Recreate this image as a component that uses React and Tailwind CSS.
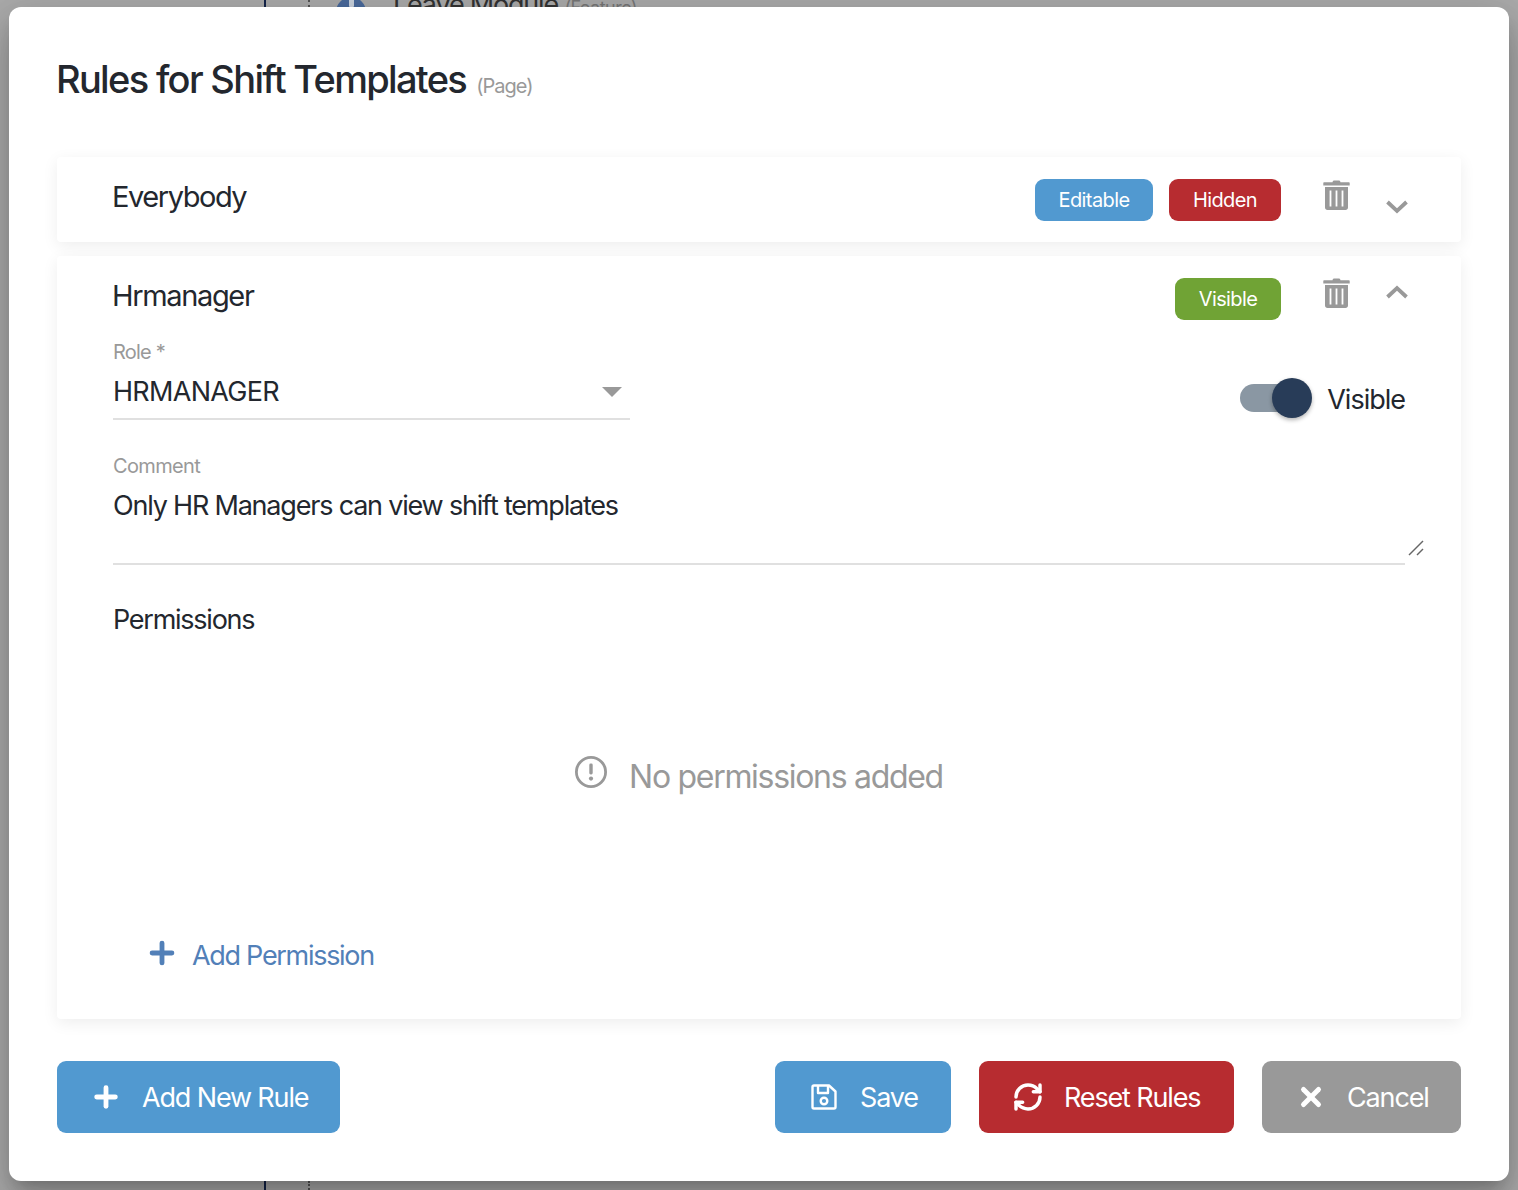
import React from "react";
import { Plus, X, RefreshCw } from "lucide-react";

const FONT = "font-['Inter','Liberation_Sans',sans-serif]";

function Trash() {
  return (
    <svg width="27" height="30" viewBox="0 0 27 30" className="block" fill="#999999">
      <path d="M9.5 2.2 C9.8 1 10.6 0.6 11.5 0.6 H15.5 C16.4 0.6 17.2 1 17.5 2.2 H26 C26.4 2.2 26.7 2.5 26.7 2.9 V5.4 H0.3 V2.9 C0.3 2.5 0.6 2.2 1 2.2 Z" />
      <path fillRule="evenodd" d="M2 7 H25 V27.5 C25 29 24 30 22.5 30 H4.5 C3 30 2 29 2 27.5 Z M6.6 10.4 V26.4 H8.4 V10.4 Z M12.6 10.4 V26.4 H14.4 V10.4 Z M18.6 10.4 V26.4 H20.4 V10.4 Z" />
    </svg>
  );
}

function Chevron({ up }) {
  return (
    <svg width="22" height="14" viewBox="0 0 22 14" fill="none" stroke="#999999" strokeWidth="3.8" className="block">
      {up ? <path d="M1.5 12 L11 3 L20.5 12" /> : <path d="M1.5 2 L11 11 L20.5 2" />}
    </svg>
  );
}

function Badge({ className, children }) {
  return (
    <span className={`flex h-[42px] items-center justify-center rounded-[9px] text-[20px] tracking-[-0.6px] text-white ${className}`}>
      {children}
    </span>
  );
}

function Btn({ className, icon, gap, children }) {
  return (
    <button className={`flex h-[72px] items-center rounded-[9px] pt-[2px] text-[27px] tracking-[-1.15px] text-white ${className}`}>
      <span className="mt-[-2px]">{icon}</span>
      <span className={gap}>{children}</span>
    </button>
  );
}

export default function App() {
  return (
    <div className={`relative h-[1190px] w-[1518px] overflow-hidden bg-[#ababab] pb-[9px] pl-[9px] pr-[9px] pt-[7px] ${FONT}`}>
      {/* page behind the overlay */}
      <div className="absolute left-[264px] top-0 h-[7px] w-[2px] bg-[#14244a]" />
      <div className="absolute bottom-0 left-[264px] h-[9px] w-[2px] bg-[#14244a]" />
      <div className="absolute left-[308px] top-0 h-[7px] border-l-2 border-dotted border-[#555]" />
      <div className="absolute bottom-0 left-[308px] h-[9px] border-l-2 border-dotted border-[#555]" />
      <div className="absolute left-[336px] top-[-3px] flex h-[30px] w-[30px] items-start justify-center rounded-full bg-[#4a6a9c] pt-[1px]">
        <span className="h-[9px] w-[5px] rounded-[1px] bg-[#c9d2de]" />
      </div>
      <div className="absolute left-[393px] top-[-12px] whitespace-nowrap text-[27px] leading-[34px] tracking-[-1.2px] text-[#333]">
        Leave Module <span className="text-[18px] tracking-[-0.5px] text-[#777]">(Feature)</span>
      </div>

      <div className="relative flex h-[1174px] w-[1500px] flex-col rounded-[12px] bg-white px-[48px] shadow-[0_11px_15px_-7px_rgba(0,0,0,0.2),0_24px_38px_3px_rgba(0,0,0,0.14),0_9px_46px_8px_rgba(0,0,0,0.12)]">
        <div className="flex h-[150px] shrink-0 items-start pt-[49px]">
          <h1 className="ml-[-1px] text-[38px] font-medium leading-[46px] tracking-[-1.68px] text-[#23272e]">Rules for Shift Templates</h1>
          <span className="ml-[10px] mt-[18px] text-[20px] leading-[24px] tracking-[-1px] text-[#999999]">(Page)</span>
        </div>

        {/* Everybody */}
        <div className="flex h-[85px] shrink-0 items-start rounded-[4px] bg-white pl-[56px] shadow-[0_4px_16px_rgba(0,0,0,0.07)]">
          <div className="ml-[-1px] mt-[22px] text-[29px] leading-[36px] tracking-[-1.45px] text-[#23272e]">Everybody</div>
          <div className="ml-auto mt-[22px] flex gap-[16px]">
            <Badge className="w-[118px] bg-[#5199d0]">Editable</Badge>
            <Badge className="w-[112px] bg-[#b72c30]">Hidden</Badge>
          </div>
          <div className="ml-[42px] mt-[23px]"><Trash /></div>
          <div className="ml-[36px] mr-[53px] mt-[43px]"><Chevron /></div>
        </div>

        {/* Hrmanager */}
        <div className="mt-[14px] flex h-[763px] shrink-0 flex-col rounded-[4px] bg-white pl-[56px] pr-[56px] shadow-[0_4px_16px_rgba(0,0,0,0.07)]">
          <div className="flex items-start">
            <div className="ml-[-1px] mt-[22px] text-[29px] leading-[36px] tracking-[-1.35px] text-[#23272e]">Hrmanager</div>
            <div className="ml-auto mt-[22px]">
              <Badge className="w-[106px] bg-[#70a335]">Visible</Badge>
            </div>
            <div className="ml-[42px] mt-[22px]"><Trash /></div>
            <div className="ml-[36px] mr-[-3px] mt-[29px]"><Chevron up /></div>
          </div>

          <div className="mt-[20px] flex items-start justify-between">
            <div className="w-[517px]">
              <div className="text-[20px] leading-[24px] tracking-[-0.8px] text-[#999999]">Role *</div>
              <div className="flex h-[56px] items-center justify-between border-b-2 border-[#e0e0e0]">
                <span className="mt-[2px] text-[27px] tracking-[-0.7px] text-[#23272e]">HRMANAGER</span>
                <span className="mr-[8px] mt-[2px] h-0 w-0 border-x-[10px] border-t-[10px] border-x-transparent border-t-[#999999]" />
              </div>
            </div>
            <div className="mr-0 mt-[40px] flex items-center">
              <div className="relative h-[28px] w-[72px]">
                <div className="absolute left-0 top-0 h-[28px] w-[66px] rounded-full bg-[#8a97a3]" />
                <div className="absolute right-0 top-[-6px] h-[40px] w-[40px] rounded-full bg-[#283c58] shadow-[0_2px_4px_rgba(0,0,0,0.3)]" />
              </div>
              <span className="ml-[15px] mt-[4px] text-[27px] leading-[32px] tracking-[-1px] text-[#23272e]">Visible</span>
            </div>
          </div>

          <div className="relative mt-[34px] h-[111px] border-b-2 border-[#e0e0e0]">
            <div className="text-[20px] leading-[24px] tracking-[-0.65px] text-[#999999]">Comment</div>
            <div className="mt-[10px] text-[27px] leading-[36px] tracking-[-1.2px] text-[#23272e]">Only HR Managers can view shift templates</div>
            <svg width="18" height="18" viewBox="0 0 18 18" className="absolute bottom-[6px] right-[-20px]" stroke="#666" strokeWidth="1.4" fill="none">
              <path d="M2 16 L16 2" />
              <path d="M10 16 L16 10" />
            </svg>
          </div>

          <div className="mt-[37px] text-[27px] leading-[36px] tracking-[-1.25px] text-[#23272e]">Permissions</div>

          <div className="mt-[119px] flex items-center justify-center">
            <svg width="34" height="34" viewBox="0 0 34 34" fill="none" className="ml-[-1px] mt-[-11px]">
              <circle cx="17" cy="17" r="14.6" stroke="#999999" strokeWidth="2.8" />
              <rect x="15.3" y="8.5" width="3.4" height="11" rx="1.4" fill="#999999" />
              <circle cx="17" cy="23.6" r="2.1" fill="#999999" />
            </svg>
            <span className="ml-[21px] text-[32px] leading-[40px] tracking-[-1.3px] text-[#999999]">No permissions added</span>
          </div>

          <div className="mt-[141px] flex items-center pl-[32px]">
            <Plus size={34} strokeWidth={3.4} color="#5280b8" className="mt-[-7px]" />
            <span className="ml-[13px] text-[27px] leading-[36px] tracking-[-1.3px] text-[#5280b8]">Add Permission</span>
          </div>
        </div>

        {/* Footer */}
        <div className="mt-[42px] flex">
          <Btn className="w-[283px] bg-[#5199d0] pl-[33px]" icon={<Plus size={32} strokeWidth={3.6} />} gap="ml-[20px]">Add New Rule</Btn>
          <Btn className="ml-auto w-[176px] bg-[#5199d0] pl-[35px]" gap="ml-[22px]" icon={
            <svg width="28" height="28" viewBox="0 0 28 28" fill="none" stroke="white" strokeWidth="2.4" strokeLinejoin="round">
              <path d="M2.5 4 C2.5 3 3 2.5 4 2.5 H19 L25.5 8.5 V24 C25.5 25 25 25.5 24 25.5 H4 C3 25.5 2.5 25 2.5 24 Z" />
              <path d="M8 2.5 V10 H18 V2.5" />
              <circle cx="14" cy="18" r="3.3" />
            </svg>
          }>Save</Btn>
          <Btn className="ml-[28px] w-[255px] bg-[#b72c30] pl-[33px]" gap="ml-[20px]" icon={<RefreshCw size={32} strokeWidth={2.6} />}>Reset Rules</Btn>
          <Btn className="ml-[28px] w-[199px] bg-[#999999] pl-[34px]" gap="ml-[21px]" icon={<X size={30} strokeWidth={4} />}>Cancel</Btn>
        </div>
      </div>
    </div>
  );
}
